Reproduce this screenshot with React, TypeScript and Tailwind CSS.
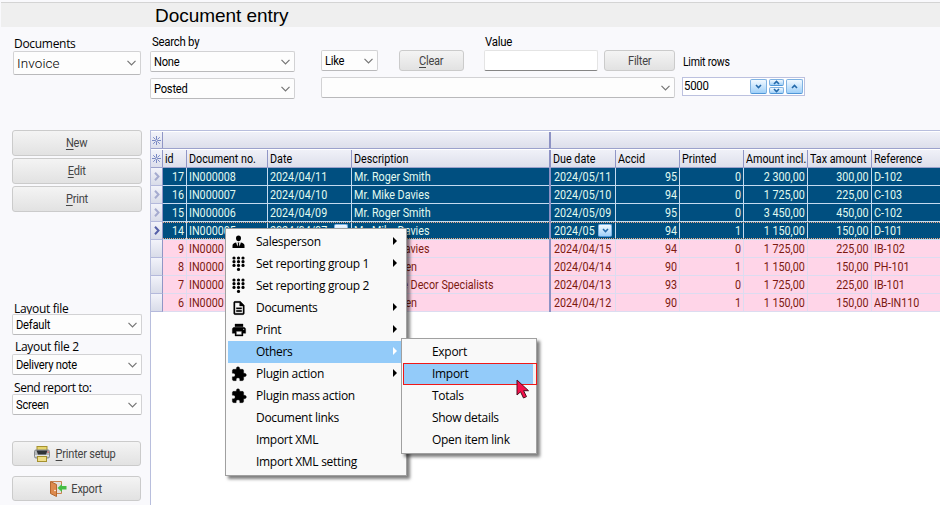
import React from "react";

const ui = "font-[Roboto,sans-serif]";
const segoe = "font-['Open_Sans','Noto_Sans',sans-serif]";

function Chevron() {
  return (
    <svg width="9" height="6" viewBox="0 0 9 6" fill="none" stroke="#757575" strokeWidth="1.2">
      <path d="M0.5 0.8 L4.5 4.8 L8.5 0.8" />
    </svg>
  );
}

function Select({ text, className, big }: { text?: string; className: string; big?: boolean }) {
  return (
    <div className={`flex shrink-0 items-center justify-between rounded-[2px] border border-[#d2d2d4] border-b-[#b9b9bb] bg-[#fdfdfd] pr-[4px] pl-[3px] text-black ${className}`}>
      <span className={`whitespace-nowrap ${big ? "text-[13.5px] font-light tracking-[0.1px]" : "origin-left scale-x-[0.93] text-[12px] tracking-[-0.25px]"}`}>{text}</span>
      <Chevron />
    </div>
  );
}

function Button({ text, hot, className, icon }: { text: string; hot?: boolean; className: string; icon?: React.ReactNode }) {
  return (
    <div className={`flex shrink-0 items-center justify-center gap-[3px] rounded-[3px] border border-[#cbcbcb] bg-linear-to-b from-[#f4f4f4] to-[#e2e2e2] text-[12px] tracking-[-0.25px] text-[#444] ${className}`}>
      {icon}
      <span className="scale-x-[0.92] whitespace-nowrap">
        {hot ? <span className="underline underline-offset-2">{text[0]}</span> : text[0]}
        {text.slice(1)}
      </span>
    </div>
  );
}

function PrinterColor() {
  return (
    <svg width="16" height="16" viewBox="0 0 16 16">
      <rect x="3" y="0.5" width="10" height="5" fill="#e6d56e" stroke="#a5912e" />
      <rect x="0.5" y="4" width="15" height="8" rx="1.5" fill="#b4b7ba" stroke="#85888a" />
      <path d="M2.5 4.500 H13.5 L12 8.5 H4Z" fill="#303438" />
      <rect x="1" y="9" width="14" height="1.500" fill="#e2e4e6" />
      <rect x="3.500" y="10.5" width="9" height="5" fill="#f0df8a" stroke="#a5912e" />
      <rect x="13.5" y="5.5" width="1.2" height="1.2" fill="#d33" />
    </svg>
  );
}

function DoorIcon() {
  return (
    <svg width="17" height="16" viewBox="0 0 17 16">
      <path d="M1 0.5 H11.5 V12.5 H6" fill="#e3e0dc" stroke="#c98350" />
      <path d="M0.5 0.5 L6.500 3.500 V15.500 L0.5 12.5Z" fill="#dd8a4e" stroke="#b4672f" />
      <circle cx="5" cy="9.500" r="0.8" fill="#fff" />
      <path d="M7.500 7 L12 3 V5 H16.500 V8.500 H12 V11Z" fill="#45bd43" />
    </svg>
  );
}

function BlueButton({ dir, className }: { dir: "up" | "down"; className: string }) {
  return (
    <span className={`flex shrink-0 items-center justify-center rounded-[2px] border border-[#7fb2e2] border-b-[#4f96d8] bg-linear-to-b from-[#f2f9ff] to-[#9fd0f8] ${className}`}>
      <svg width="7" height="5" viewBox="0 0 7 5" fill="none" stroke="#2368aa" strokeWidth="1.6">
        <path d={dir === "down" ? "M1 1 L3.5 3.5 L6 1" : "M1 4 L3.5 1.5 L6 4"} />
      </svg>
    </span>
  );
}

const grid = "grid grid-cols-[24px_81px_84px_197px_2px_65px_64px_64px_64px_64px_1fr]";

function Star() {
  return (
    <svg width="9" height="9" viewBox="0 0 9 9" stroke="#6c7dbd" strokeWidth="0.9" fill="none">
      <path d="M4.5 0 V3 M4.5 6 V9 M0 4.5 H3 M6 4.5 H9 M1.2 1.2 L3.3 3.3 M5.7 5.7 L7.8 7.8 M7.8 1.2 L5.7 3.3 M3.3 5.7 L1.2 7.8" />
      <circle cx="4.5" cy="4.5" r="1" />
    </svg>
  );
}

const rows = [
  ["17", "IN000008", "2024/04/11", "Mr. Roger Smith", "2024/05/11", "95", "0", "2 300,00", "300,00", "D-102"],
  ["16", "IN000007", "2024/04/10", "Mr. Mike Davies", "2024/05/10", "94", "0", "1 725,00", "225,00", "C-103"],
  ["15", "IN000006", "2024/04/09", "Mr. Roger Smith", "2024/05/09", "95", "0", "3 450,00", "450,00", "C-102"],
  ["14", "IN000005", "2024/04/07", "Mr. Mike Davies", "2024/05", "94", "1", "1 150,00", "150,00", "D-101"],
  ["9", "IN0000", "", "Mr. Mike Davies", "2024/04/15", "94", "0", "1 725,00", "225,00", "IB-102"],
  ["8", "IN0000", "", "Mr. Neil Allen", "2024/04/14", "90", "1", "1 150,00", "150,00", "PH-101"],
  ["7", "IN0000", "", "Farmhouse Decor Specialists", "2024/04/13", "93", "0", "1 725,00", "225,00", "IB-101"],
  ["6", "IN0000", "", "Mr. Neil Allen", "2024/04/12", "90", "1", "1 150,00", "150,00", "AB-IN110"],
];
const heads = ["id", "Document no.", "Date", "Description", "Due date", "Accid", "Printed", "Amount incl.", "Tax amount", "Reference"];
const rightAligned = [0, 5, 6, 7, 8];

function Row({ cells, index }: { cells: string[]; index: number }) {
  const sel = index < 4;
  const focus = index === 3;
  const line = sel ? "border-[#c5dbf0]" : "border-[#dcdcf0]";
  return (
    <div className="flex h-[18px]">
      <div className="flex w-[12px] shrink-0 items-center justify-center border-r border-b border-[#9096c6] border-b-[#b4b9dc] bg-linear-to-b from-[#f2f3fa] to-[#d9dce9]">
        {sel && (
          <svg width="6" height="9" viewBox="0 0 6 9" fill="none" stroke={focus ? "#5560a8" : "#a5abcf"} strokeWidth="2">
            <path d="M1 0.8 L4.5 4.5 L1 8.2" />
          </svg>
        )}
      </div>
      <div className={`${grid} relative grow ${sel ? "bg-[#004f80] text-[#e2fbf0]" : "bg-[#ffd5e8] text-[#7c1a10]"}`}>
        {cells.map((c, i) => (
          <React.Fragment key={i}>
            {i === 4 && <div className="bg-[#8d92c4]" />}
            <div className={`flex min-w-0 items-center border-b pt-[2px] text-[12.5px] leading-none whitespace-nowrap ${line} ${i === 3 || i === 9 ? "" : "border-r"} ${rightAligned.includes(i) ? "justify-end pr-[2px]" : i === 4 ? "pl-[3px]" : "pl-[2px]"}`}>
              <span className={`scale-x-[0.86] ${rightAligned.includes(i) ? "origin-right" : "origin-left"}`}>{c}</span>
              {focus && i === 4 && <BlueButton dir="down" className="mb-[2px] -ml-[3px] h-[13px] w-[14px]" />}
              {focus && i === 2 && <BlueButton dir="down" className="mb-[2px] -ml-[3px] h-[13px] w-[14px]" />}
            </div>
          </React.Fragment>
        ))}
        {focus && <div className="absolute inset-x-0 top-0 bottom-[1px] border-y border-dotted border-[#f0a880]" />}
      </div>
    </div>
  );
}

function Keypad() {
  return (
    <svg width="15" height="16" viewBox="0 0 15 16">
      {[2, 5.7, 9.4].map((y) => [3, 7.5, 12].map((x) => <circle key={`${x}-${y}`} cx={x} cy={y} r="1.6" />))}
      <circle cx="7.5" cy="13.4" r="1.6" />
    </svg>
  );
}

function MenuIcon({ kind }: { kind: string }) {
  if (kind === "keypad") return <Keypad />;
  if (kind === "person")
    return (
      <svg width="15" height="16" viewBox="0 0 15 16">
        <path d="M7.500 1.500 a2.500 2.700 0 0 1 2.500 2.700 c0 1.800 -1.100 3 -2.500 3 s-2.500 -1.200 -2.500 -3 a2.500 2.700 0 0 1 2.500 -2.700Z" />
        <path d="M1.500 14 V11.500 C1.500 9.500 3.500 8.600 5.200 8.400 L6.400 12.500 L7 9.800 L6.500 8.500 H8.500 L8 9.800 L8.600 12.500 L9.800 8.400 C11.500 8.600 13.500 9.500 13.500 11.500 V14Z" />
      </svg>
    );
  const paths: Record<string, string> = {
    doc: "M14 2H6c-1.1 0-2 .9-2 2v16c0 1.1.9 2 2 2h12c1.1 0 2-.9 2-2V8l-6-6zM6 20V4h7v5h5v11H6zM8 11.5h8v2H8zM8 15.5h8v2H8z",
    print: "M19 8H5c-1.66 0-3 1.34-3 3v6h4v4h12v-4h4v-6c0-1.66-1.34-3-3-3zm-3 11H8v-5h8v5zm3-7c-.55 0-1-.45-1-1s.45-1 1-1 1 .45 1 1-.45 1-1 1zm-1-9H6v4h12V3z",
    plugin: "M20.5 11H19V7c0-1.1-.9-2-2-2h-4V3.5C13 2.12 11.88 1 10.5 1S8 2.12 8 3.5V5H4c-1.1 0-1.99.9-1.99 2v3.8H3.5c1.49 0 2.7 1.21 2.7 2.7s-1.21 2.7-2.7 2.7H2V20c0 1.1.9 2 2 2h3.8v-1.5c0-1.49 1.21-2.7 2.7-2.7 1.49 0 2.7 1.21 2.7 2.7V22H17c1.1 0 2-.9 2-2v-4h1.5c1.38 0 2.5-1.12 2.5-2.5S21.88 11 20.5 11z",
  };
  if (!paths[kind]) return null;
  return (
    <svg width="16" height="16" viewBox="0 0 24 24">
      <path fillRule="evenodd" d={paths[kind]} stroke="#000" strokeWidth="0.5" />
    </svg>
  );
}

const menu: [string, string, boolean][] = [
  ["Salesperson", "person", true],
  ["Set reporting group 1", "keypad", true],
  ["Set reporting group 2", "keypad", false],
  ["Documents", "doc", true],
  ["Print", "print", true],
  ["Others", "", true],
  ["Plugin action", "plugin", true],
  ["Plugin mass action", "plugin", false],
  ["Document links", "", false],
  ["Import XML", "", false],
  ["Import XML setting", "", false],
];

export default function App() {
  return (
    <div className={`relative flex h-[505px] w-[940px] flex-col overflow-hidden bg-[#f9f9fc] ${ui}`}>
      <div className="ml-[1px] h-[27px] shrink-0 pt-[2px]">
        <div className="h-[25px] border-t border-[#d4d4d4] bg-[#efefef] pl-[154px] font-['Liberation_Sans',Arial,sans-serif] text-[19px] leading-[25px] tracking-[-0.05px] text-black">Document entry</div>
      </div>
      <div className="flex grow">
        <div className="flex w-[150px] shrink-0 flex-col pl-[12px]">
          <div className={`mt-[8px] h-[16px] pl-[2px] text-[12px] leading-[17px] tracking-[-0.3px] ${segoe}`}>Documents</div>
          <Select text="Invoice" big className="ml-[1px] h-[24px] w-[128px]" />
          <div className="mt-[55px] flex flex-col gap-[2px]">
            <Button text="New" hot className="h-[26px] w-[130px]" />
            <Button text="Edit" hot className="h-[26px] w-[130px]" />
            <Button text="Print" hot className="h-[26px] w-[130px]" />
          </div>
          <div className={`mt-[88px] h-[14px] pl-[2px] text-[12px] leading-[17px] tracking-[-0.3px] ${segoe}`}>Layout file</div>
          <Select text="Default" className="h-[21px] w-[130px]" />
          <div className={`mt-[3px] h-[16px] pl-[3px] text-[12px] leading-[17px] tracking-[-0.3px] ${segoe}`}>Layout file 2</div>
          <Select text="Delivery note" className="h-[21px] w-[130px]" />
          <div className={`mt-[4px] h-[15px] pl-[2px] text-[12px] leading-[17px] tracking-[-0.45px] ${segoe}`}>Send report to:</div>
          <Select text="Screen" className="h-[21px] w-[130px]" />
          <Button text="Printer setup" hot icon={<PrinterColor />} className="mt-[26px] h-[25px] w-[129px]" />
          <Button text="Export" icon={<DoorIcon />} className="mt-[10px] h-[25px] w-[129px]" />
        </div>
        <div className="flex min-w-0 grow flex-col">
          <div className="flex h-[103px] text-[12px] tracking-[-0.25px] text-black">
            <div className="w-[171px]">
              <div className="mt-[8px] h-[16px] origin-left scale-x-[0.95] pl-[2px] leading-[14px]">Search by</div>
              <Select text="None" className="h-[21px] w-[145px]" />
              <Select text="Posted" className="mt-[6px] h-[21px] w-[145px]" />
            </div>
            <div className="w-[354px]">
              <div className="flex h-[44px] items-end">
                <Select text="Like" className="h-[21px] w-[57px]" />
                <Button text="Clear" hot className="ml-[21px] h-[21px] w-[65px]" />
                <div className="ml-[20px] w-[114px]">
                  <div className="h-[15px] origin-left scale-x-[0.95] pl-[1px] leading-[14px]">Value</div>
                  <div className="h-[21px] rounded-[2px] border border-[#e4e4e4] border-b-[#858585] bg-white" />
                </div>
                <Button text="Filter" className="ml-[6px] h-[21px] w-[71px]" />
              </div>
              <Select className="mt-[6px] h-[21px] w-[354px]" />
            </div>
            <div className="ml-[7px] pt-[28px]">
              <div className="h-[22px] origin-left scale-x-[0.88] pl-[1px] leading-[14px]">Limit rows</div>
              <div className="flex h-[19px] w-[123px] items-center border border-[#bcc1df] bg-white pr-[1px] pl-[1px]">
                <span className="mb-[1px] grow origin-left scale-x-[0.95]">5000</span>
                <BlueButton dir="down" className="h-[15px] w-[17px]" />
                <span className="mx-[2px] flex flex-col gap-[1px]">
                  <BlueButton dir="up" className="h-[7px] w-[15px]" />
                  <BlueButton dir="down" className="h-[7px] w-[15px]" />
                </span>
                <BlueButton dir="up" className="h-[15px] w-[17px]" />
              </div>
            </div>
          </div>
          <div className="grow border-t border-l border-[#b8bedd] bg-white">
            <div className="flex h-[18px] border-b border-[#9ca2cc] pt-[1px]">
              <div className="flex w-[12px] items-center justify-center border-r border-[#9096c6] bg-linear-to-b from-[#f2f3fa] to-[#dddfec]"><Star /></div>
              <div className="w-[386px] bg-linear-to-b from-[#f0f1f8] to-[#dddfeb]" />
              <div className="w-[2px] bg-[#8d92c4]" />
              <div className="grow bg-linear-to-b from-[#f0f1f8] to-[#dddfeb]" />
            </div>
            <div className="flex h-[19px] border-b border-[#9ca2cc] pt-[1px]">
              <div className="flex w-[12px] shrink-0 items-center justify-center border-r border-[#9096c6] bg-linear-to-b from-[#f2f3fa] to-[#dddfec]"><Star /></div>
              <div className={`${grid} grow bg-linear-to-b from-[#f0f1f8] to-[#dddfeb] text-[12.5px] leading-[17px] text-black`}>
                {heads.map((h, i) => (
                  <React.Fragment key={h}>
                    {i === 4 && <div className="bg-[#8d92c4]" />}
                    <div className={`flex min-w-0 pl-[2px] whitespace-nowrap ${i === 3 || i === 9 ? "" : "border-r border-[#9096c6]"}`}>
                      <span className="origin-left scale-x-[0.86]">{h}</span>
                    </div>
                  </React.Fragment>
                ))}
              </div>
            </div>
            {rows.map((r, i) => <Row key={r[0]} cells={r} index={i} />)}
          </div>
        </div>
      </div>

      <div className={`absolute top-[228px] left-[225px] h-[248px] w-[182px] border border-[#a0a0a0] bg-[#f9f9f9] p-[2px] text-[12px] tracking-[-0.3px] text-black shadow-[3px_3px_3px_rgba(0,0,0,0.5)] ${segoe}`}>
        {menu.map(([label, icon, arrow]) => (
          <div key={label} className={`flex h-[22px] items-center ${label === "Others" ? "bg-[#93cbf9]" : ""}`}>
            <span className="flex w-[28px] shrink-0 pl-[3px]"><MenuIcon kind={icon} /></span>
            <span className="grow whitespace-nowrap">{label}</span>
            {arrow && (
              <svg className="mr-[7px] mb-[3px]" width="4" height="8" viewBox="0 0 4 8" fill={label === "Others" ? "#fff" : "#000"}>
                <path d="M0 0 L4 4 L0 8Z" />
              </svg>
            )}
          </div>
        ))}
      </div>
      <div className={`absolute top-[338px] left-[401px] h-[116px] w-[136px] border border-[#a0a0a0] bg-[#f9f9f9] py-[2px] pl-[1px] text-[12px] tracking-[-0.3px] text-black shadow-[3px_3px_3px_rgba(0,0,0,0.5)] ${segoe}`}>
        {["Export", "Import", "Totals", "Show details", "Open item link"].map((t) => (
          <div key={t} className={`flex h-[22px] items-center whitespace-nowrap ${t === "Import" ? "-mr-[1px] border border-[#f01818] bg-linear-to-r from-[#93cbf9] from-98% to-[#f2f2f2] to-98% pl-[28px]" : "pl-[29px]"}`}>{t}</div>
        ))}
      </div>
      <svg className="absolute top-[379px] left-[515px]" width="16" height="21" viewBox="0 0 16 21">
        <path d="M2 1 V16 L5.500 12.800 L8.500 19 L11.500 17.600 L8.600 11.700 H13.500Z" fill="#f5104a" stroke="#4b1020" strokeWidth="1" />
      </svg>
    </div>
  );
}
